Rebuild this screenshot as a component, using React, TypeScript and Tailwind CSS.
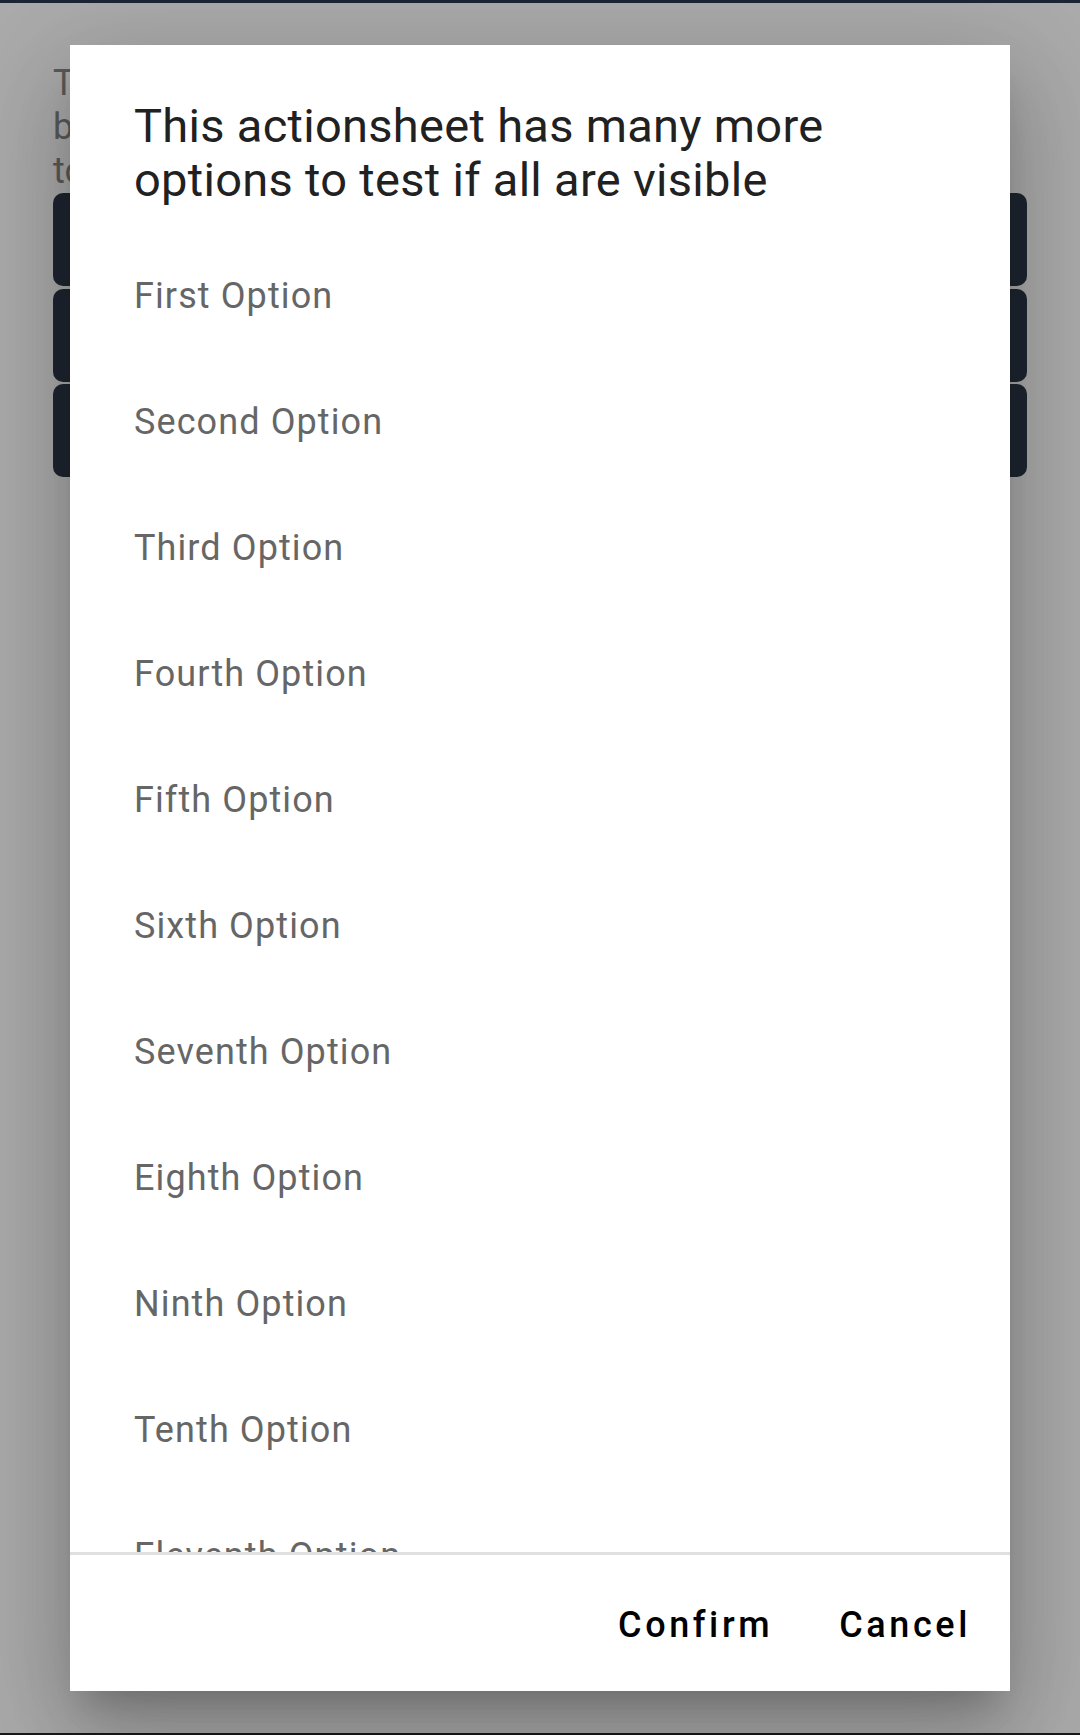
import React from 'react';

const OPTIONS = [
  'First Option',
  'Second Option',
  'Third Option',
  'Fourth Option',
  'Fifth Option',
  'Sixth Option',
  'Seventh Option',
  'Eighth Option',
  'Ninth Option',
  'Tenth Option',
  'Eleventh Option',
  'Twelfth Option',
];

const FONT = { fontFamily: 'Roboto, "Noto Sans", "Liberation Sans", sans-serif' };

const App: React.FC = () => {
  return (
    <div className="relative w-[1080px] h-[1735px] overflow-hidden bg-[#ababab]" style={FONT}>
      {/* page behind the scrim */}
      <div className="h-[3px] bg-[#1c2534]" />
      <div className="px-[53px] pt-[58px]">
        <p className="text-[36px] leading-[44px] text-[#5a5a5a]">
          <span className="block">The buttons below open</span>
          <span className="block">both kinds of action sheets</span>
          <span className="block">to check their layout</span>
        </p>
        <div className="flex flex-col gap-[2.5px]">
          <div className="h-[93px] rounded-[10px] bg-[#1e2631]" />
          <div className="h-[93px] rounded-[10px] bg-[#1e2631]" />
          <div className="h-[93px] rounded-[10px] bg-[#1e2631]" />
        </div>
      </div>
      <div className="absolute bottom-0 left-0 right-0 h-[2px] bg-[#1a1a1a]" />

      {/* dialog */}
      <div className="absolute left-[70px] top-[45px] w-[940px] h-[1646px] flex flex-col bg-white shadow-[0_54px_85px_7px_rgba(0,0,0,0.14),0_20px_103px_18px_rgba(0,0,0,0.12),0_25px_34px_-16px_rgba(0,0,0,0.2)]">
        <div className="px-[64px] pt-[54px] pb-[26px]">
          <h2 className="text-[47px] leading-[54px] tracking-[0.3px] text-[#212121]">
            This actionsheet has many more options to test if all are visible
          </h2>
        </div>
        <div className="flex-1 min-h-0 overflow-hidden">
          {OPTIONS.map((o) => (
            <div key={o} className="h-[126px] flex items-center px-[64px]">
              <span className="text-[36px] leading-[44px] tracking-[1.1px] text-[#666666]">{o}</span>
            </div>
          ))}
        </div>
        <div className="h-[3px] bg-[#e0e0e0]" />
        <div className="h-[136px] flex items-center justify-end gap-[66px] pr-[39px] pt-[4px]">
          <button className="text-[36px] font-medium tracking-[3.6px] text-black">Confirm</button>
          <button className="text-[36px] font-medium tracking-[3.6px] text-black">Cancel</button>
        </div>
      </div>
    </div>
  );
};

export default App;
